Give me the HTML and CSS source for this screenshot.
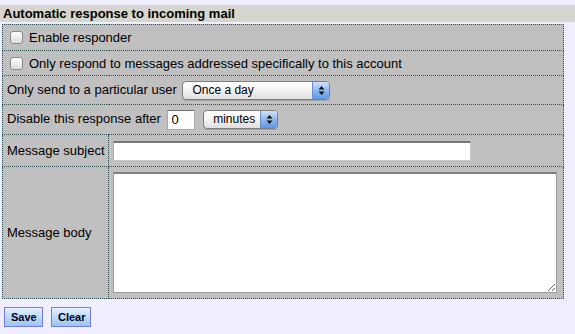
FILE: index.html
```html
<!DOCTYPE html>
<html>
<head>
<meta charset="utf-8">
<link rel="stylesheet" href="styles.css">
</head>
<body>
<div class="title">Automatic response to incoming mail</div>
<form class="form">
<table class="grid">
  <colgroup><col class="c1"><col class="c2"></colgroup>
  <tr class="r1"><td colspan="2"><label class="chk"><input type="checkbox" class="cb"> Enable responder</label></td></tr>
  <tr class="r2"><td colspan="2"><label class="chk"><input type="checkbox" class="cb"> Only respond to messages addressed specifically to this account</label></td></tr>
  <tr class="r3"><td colspan="2" class="inl">Only send to a particular user
    <span class="sel sel-wide"><span class="sel-text">Once a day</span><span class="sel-arrow"><svg width="7" height="11" viewBox="0 0 7 11"><path d="M3.5 1 L6.5 4.5 L0.5 4.5 Z M3.5 10 L6.5 6.5 L0.5 6.5 Z" fill="#111"/></svg></span></span>
  </td></tr>
  <tr class="r4"><td colspan="2" class="inl">Disable this response after <input type="text" class="num" value="0">
    <span class="sel sel-min"><span class="sel-text">minutes</span><span class="sel-arrow"><svg width="7" height="11" viewBox="0 0 7 11"><path d="M3.5 1 L6.5 4.5 L0.5 4.5 Z M3.5 10 L6.5 6.5 L0.5 6.5 Z" fill="#111"/></svg></span></span>
  </td></tr>
  <tr class="r5"><td class="lab">Message subject</td><td class="fld"><input type="text" class="subject"></td></tr>
  <tr class="r6"><td class="lab">Message body</td><td class="fld"><textarea class="body-ta"></textarea></td></tr>
</table>
<div class="actions">
  <button type="button" class="btn">Save</button>
  <button type="button" class="btn">Clear</button>
</div>
</form>
</body>
</html>
```
FILE: styles.css
```css
html, body {
  margin: 0;
  padding: 0;
  background: #eeeeff;
  font-family: "Liberation Sans", Arial, sans-serif;
  font-size: 13px;
  color: #000;
}
.title {
  margin-top: 5px;
  height: 17px;
  line-height: 17px;
  background: #d6d6ce;
  font-weight: bold;
  padding-left: 3px;
}
.form { margin: 0; }
.grid {
  margin: 2px 0 0 2px;
  width: 562px;
  border-collapse: collapse;
  background: #c0c0c0;
  table-layout: fixed;
}
.c1 { width: 106px; }
.grid td {
  border: 1px dotted #2f4f4f;
  padding: 0 0 0 4px;
  vertical-align: middle;
  white-space: nowrap;
}
.r1 td { height: 25px; }
.r2 td { height: 24px; }
.r3 td { height: 28px; }
.r4 td { height: 29px; }
.r5 td { height: 31px; }
.r6 td { height: 131px; }
.chk {
  display: flex;
  align-items: center;
  gap: 6px;
}
.cb {
  appearance: none;
  -webkit-appearance: none;
  width: 13px;
  height: 13px;
  margin: 0 0 0 3px;
  border: 1px solid #8a8a8a;
  border-radius: 3px;
  background: linear-gradient(#ffffff, #dcdcdc);
  box-sizing: border-box;
}
.sel {
  position: relative;
  display: inline-block;
  vertical-align: middle;
  box-sizing: border-box;
  height: 19px;
  border: 1px solid #7d7d7d;
  border-radius: 4px;
  background: linear-gradient(#ffffff, #f4f4f4 50%, #dedede);
  font-size: 12px;
  line-height: 17px;
  box-shadow: 0 1px 0 rgba(0,0,0,0.15);
}
.sel-wide { width: 148px; margin-left: 2px; }
.sel-min { width: 75px; margin-left: 5px; }
.sel-text { padding-left: 9px; }
.sel-arrow {
  position: absolute;
  right: 0;
  top: 0;
  bottom: 0;
  width: 16px;
  border-left: 1px solid #6a8fc8;
  border-radius: 0 3px 3px 0;
  background: linear-gradient(#cfe2fb, #8fb8ef 50%, #5e98e6);
  display: flex;
  align-items: center;
  justify-content: center;
}
.num {
  box-sizing: border-box;
  width: 28px;
  height: 20px;
  vertical-align: middle;
  margin: 0 0 0 2px;
  border: 1px solid #a9a9a9;
  border-top-color: #6f6f6f;
  padding: 0 0 0 4px;
  font-family: "Liberation Sans", Arial, sans-serif;
  font-size: 13px;
  background: #fff;
}
.lab { padding-left: 4px; }
.fld { padding-left: 4px !important; }
.subject {
  display: block;
  box-sizing: border-box;
  width: 358px;
  height: 20px;
  margin: 0;
  border: 1px solid #c8c8c8;
  border-top: 2px solid #777;
  border-left-color: #aaa;
  background: #fff;
}
.body-ta {
  display: block;
  box-sizing: border-box;
  width: 444px;
  height: 121px;
  margin: 0;
  border: 1px solid #9a9a9a;
  border-top: 2px solid #808080;
  background: #fff;
}
.actions {
  display: flex;
  gap: 8px;
  margin: 8px 0 0 4px;
}
.btn {
  box-sizing: border-box;
  height: 20px;
  padding: 0 6px;
  border: 1px solid #7a7ae0;
  background: linear-gradient(#e4f0ff, #b4d6f6 60%, #9cc6f0);
  font-family: "Liberation Sans", Arial, sans-serif;
  font-weight: bold;
  font-size: 11px;
  color: #000022;
}
.btn:first-child { width: 39px; }
.btn:last-child { width: 40px; }
```
